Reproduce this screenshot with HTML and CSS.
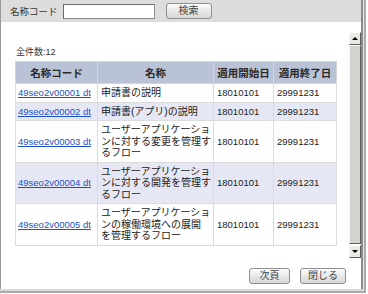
FILE: index.html
```html
<!DOCTYPE html>
<html lang="ja">
<head>
<meta charset="utf-8">
<title>名称コード検索</title>
<link rel="stylesheet" href="styles.css">
</head>
<body>
<div class="outer"><div class="mid"><div class="win">
  <div class="searchbar">
    <span class="label">名称コード</span>
    <input class="field" type="text">
    <button class="btn btn-search">検索</button>
  </div>
  <div class="main">
    <div class="content">
      <div class="count">全件数:12</div>
      <table class="grid">
        <colgroup><col class="c1"><col class="c2"><col class="c3"><col class="c4"></colgroup>
        <thead>
          <tr><th>名称コード</th><th>名称</th><th>適用開始日</th><th>適用終了日</th></tr>
        </thead>
        <tbody>
          <tr><td><a class="code" href="#">49seo2v00001 dt</a></td><td>申請書の説明</td><td class="date">18010101</td><td class="date">29991231</td></tr>
          <tr class="alt"><td><a class="code" href="#">49seo2v00002 dt</a></td><td>申請書(アプリ)の説明</td><td class="date">18010101</td><td class="date">29991231</td></tr>
          <tr><td><a class="code" href="#">49seo2v00003 dt</a></td><td class="name">ユーザーアプリケーショ<br>ンに対する変更を管理す<br>るフロー</td><td class="date">18010101</td><td class="date">29991231</td></tr>
          <tr class="alt"><td><a class="code" href="#">49seo2v00004 dt</a></td><td class="name">ユーザーアプリケーショ<br>ンに対する開発を管理す<br>るフロー</td><td class="date">18010101</td><td class="date">29991231</td></tr>
          <tr><td><a class="code" href="#">49seo2v00005 dt</a></td><td class="name">ユーザーアプリケーショ<br>ンの稼働環境への展開<br>を管理するフロー</td><td class="date">18010101</td><td class="date">29991231</td></tr>
        </tbody>
      </table>
      <div class="actions">
        <button class="btn btn-next">次頁</button>
        <button class="btn btn-close">閉じる</button>
      </div>
    </div>
    <div class="scrollbar">
      <div class="sb-btn"><span class="tri-up"></span></div>
      <div class="sb-thumb"></div>
      <div class="sb-btn"><span class="tri-down"></span></div>
    </div>
  </div>
</div></div></div>
</body>
</html>
```
FILE: styles.css
```css
* { box-sizing: border-box; }
html, body { margin: 0; padding: 0; background: #fff; }
body {
  width: 368px;
  height: 294px;
  overflow: hidden;
  font-family: "Liberation Sans", "Noto Sans CJK JP", sans-serif;
  color: #222;
}
.outer {
  width: 366px;
  height: 293px;
  border-right: 2px solid #a9a9a9;
  border-bottom: 2px solid #ababab;
}
.mid {
  height: 100%;
  border-right: 1px solid #e6e6e6;
  border-bottom: 2px solid #d9d9d9;
}
.win {
  height: 100%;
  display: flex;
  flex-direction: column;
  border-left: 1px solid #9a9a9a;
  border-right: 2px solid #8b8b8b;
}
.searchbar {
  flex: none;
  height: 22px;
  background: #dddddd;
  display: flex;
  align-items: center;
  padding-left: 9px;
}
.label {
  font-size: 9.5px;
  color: #333;
  margin-right: 5px;
}
.field {
  width: 92px;
  height: 15px;
  margin: 0;
  padding: 0;
  border: 1px solid #8a8a8a;
  border-top-color: #6a6a6a;
  border-left-color: #6a6a6a;
  background: #fff;
}
.btn {
  height: 16px;
  margin: 0;
  padding: 0;
  border: 1px solid #8e8e8e;
  border-radius: 3px;
  background: linear-gradient(#fdfdfd, #e4e4e4 60%, #d8d8d8);
  font-family: "Liberation Sans", "Noto Sans CJK JP", sans-serif;
  font-size: 10px;
  line-height: 14px;
  color: #444;
}
.btn-search { width: 46px; margin-left: 11px; }
.btn-next { width: 41px; }
.btn-close { width: 46px; }
.main {
  flex: 1;
  display: flex;
  min-height: 0;
}
.content {
  flex: 1;
  display: flex;
  flex-direction: column;
  padding: 24px 0 0 14px;
}
.count {
  font-size: 9px;
  line-height: 13px;
  padding-left: 1px;
  color: #333;
}
.grid {
  margin-top: 2px;
  width: 321px;
  border-collapse: collapse;
  table-layout: fixed;
}
.c1 { width: 82px; }
.c2 { width: 116px; }
.c3 { width: 60px; }
.c4 { width: 63px; }
.grid th {
  height: 22px;
  padding: 0;
  background: #b9c3d5;
  border: 1px solid #d2d6de;
  font-size: 10.5px;
  font-weight: bold;
  color: #2a2a2a;
  text-align: center;
}
.grid td {
  border: 1px solid #dcdcdc;
  padding: 3px 3px;
  font-size: 10px;
  line-height: 11.5px;
  vertical-align: middle;
  color: #222;
}
.grid td:first-child { padding-left: 2px; }
.grid tr.alt td { background: #e5e8f4; }
.grid td.name { white-space: nowrap; }
.code {
  font-size: 9.5px;
  color: #1f50c4;
  text-decoration: underline;
}
.grid td.date { font-size: 9.5px; }
.actions {
  display: flex;
  justify-content: flex-end;
  gap: 10px;
  margin-top: 22px;
  padding-right: 3px;
}
.scrollbar {
  flex: none;
  width: 12px;
  height: 226px;
  margin-top: 10px;
  display: flex;
  flex-direction: column;
}
.sb-btn {
  flex: none;
  height: 13px;
  background: #ebe9e5;
  border: 1px solid;
  border-color: #fff #5e5e5e #5e5e5e #f4f4f4;
  display: flex;
  align-items: center;
  justify-content: center;
}
.tri-up, .tri-down {
  width: 0;
  height: 0;
  border-left: 3px solid transparent;
  border-right: 3px solid transparent;
}
.tri-up { border-bottom: 3px solid #000; }
.tri-down { border-top: 3px solid #000; }
.sb-thumb {
  flex: 1;
  margin: 0 0 1px;
  background: #d5d3cf;
  border: 1px solid;
  border-color: #f6f6f6 #5e5e5e #5e5e5e #f6f6f6;
}
```
